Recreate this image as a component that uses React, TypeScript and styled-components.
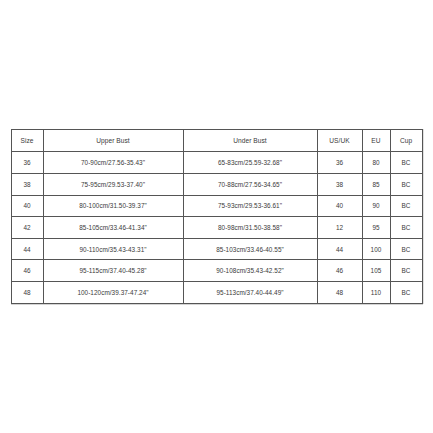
import React from "react";
import styled, { createGlobalStyle } from "styled-components";

const Global = createGlobalStyle`
  html, body { margin: 0; padding: 0; background: #fff; }
  body { font-family: "Liberation Sans", Arial, sans-serif; }
`;

const Page = styled.div`
  width: 433px;
  height: 433px;
  display: flex;
  align-items: center;
  justify-content: center;
  background: #fff;
`;

const Table = styled.table`
  width: 411px;
  table-layout: fixed;
  border-collapse: collapse;
  box-shadow: 0 1px 0 #d4d4d4, 1px 0 0 #e0e0e0;
  color: #3a3a3a;
  font-family: "Liberation Sans", Arial, sans-serif;
`;

const Row = styled.tr<{ $head?: boolean }>`
  height: ${(p) => (p.$head ? "22px" : "21.6px")};
`;

const Cell = styled.td<{ $head?: boolean }>`
  border: 1px solid #555;
  padding: 0;
  text-align: center;
  vertical-align: middle;
  font-size: ${(p) => (p.$head ? "6.6px" : "6.4px")};
  font-weight: normal;
  white-space: nowrap;
  letter-spacing: 0.05px;
`;

const widths = [32, 140, 134, 45, 28, 32];
const head = ["Size", "Upper Bust", "Under Bust", "US/UK", "EU", "Cup"];
const rows = [
  ["36", "70-90cm/27.56-35.43\"", "65-83cm/25.59-32.68\"", "36", "80", "BC"],
  ["38", "75-95cm/29.53-37.40\"", "70-88cm/27.56-34.65\"", "38", "85", "BC"],
  ["40", "80-100cm/31.50-39.37\"", "75-93cm/29.53-36.61\"", "40", "90", "BC"],
  ["42", "85-105cm/33.46-41.34\"", "80-98cm/31.50-38.58\"", "12", "95", "BC"],
  ["44", "90-110cm/35.43-43.31\"", "85-103cm/33.46-40.55\"", "44", "100", "BC"],
  ["46", "95-115cm/37.40-45.28\"", "90-108cm/35.43-42.52\"", "46", "105", "BC"],
  ["48", "100-120cm/39.37-47.24\"", "95-113cm/37.40-44.49\"", "48", "110", "BC"],
];

export default function App() {
  return (
    <>
      <Global />
      <Page>
        <Table>
          <colgroup>
            {widths.map((w, i) => (
              <col key={i} style={{ width: w }} />
            ))}
          </colgroup>
          <tbody>
            <Row $head>
              {head.map((h) => (
                <Cell $head key={h}>{h}</Cell>
              ))}
            </Row>
            {rows.map((r, i) => (
              <Row key={i}>
                {r.map((c, j) => (
                  <Cell key={j}>{c}</Cell>
                ))}
              </Row>
            ))}
          </tbody>
        </Table>
      </Page>
    </>
  );
}
